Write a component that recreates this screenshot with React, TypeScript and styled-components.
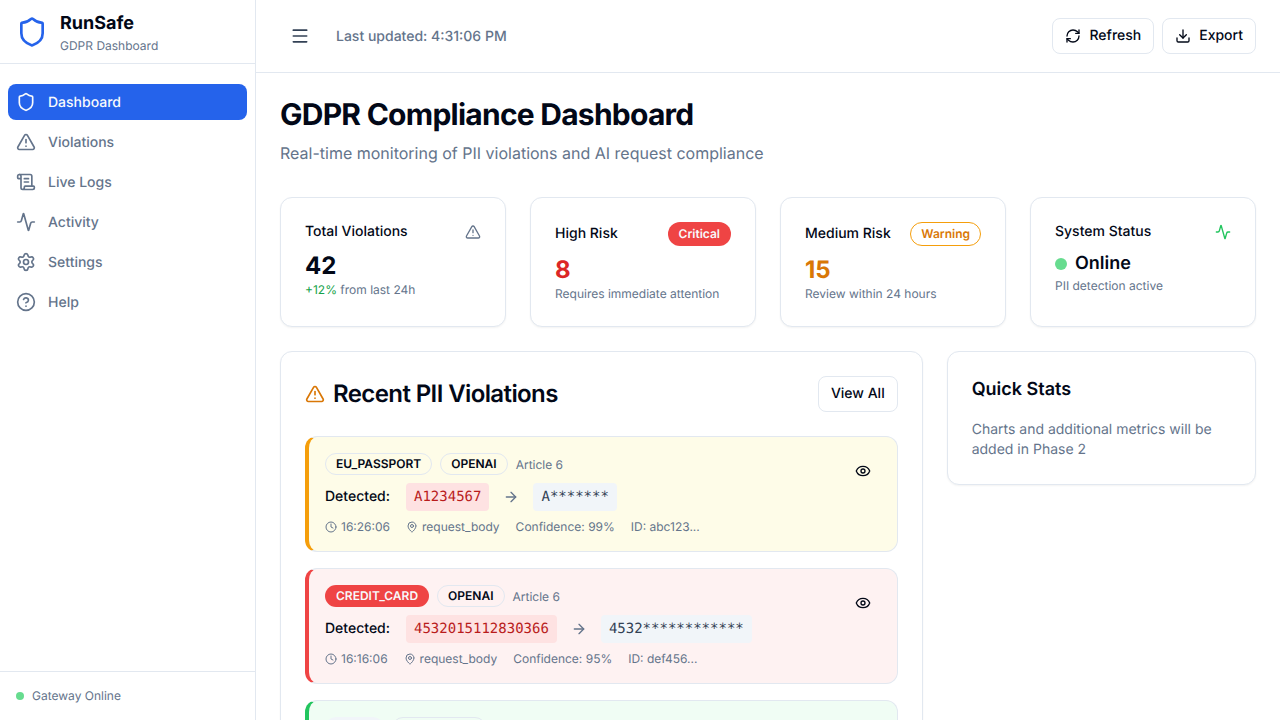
import React from "react";
import styled, { createGlobalStyle } from "styled-components";
import {
  Shield, TriangleAlert, ScrollText, Activity, Settings, CircleHelp, Menu, RefreshCw, Download,
  Clock, MapPin, Eye, ArrowRight,
} from "lucide-react";

const Global = createGlobalStyle`
  html, body, #root { height: 100%; margin: 0; }
  body {
    font-family: Inter, "Noto Sans", sans-serif; color: #020817; background: #fff; overflow: hidden;
    text-rendering: geometricPrecision; font-feature-settings: "rlig" 1, "calt" 1;
  }
  * { box-sizing: border-box; }
`;

const Shell = styled.div`display: flex; height: 100vh; width: 100%;`;
const Sidebar = styled.aside`
  width: 256px; flex: none; display: flex; flex-direction: column;
  border-right: 1px solid #e2e8f0; background: #fff;
`;
const Brand = styled.div`
  height: 64px; flex: none; display: flex; align-items: center; gap: 12px; padding: 0 16px;
  border-bottom: 1px solid #e2e8f0; color: #2563eb;
`;
const BrandText = styled.div`display: flex; flex-direction: column;`;
const BrandName = styled.div`font-size: 18px; line-height: 28px; font-weight: 700; color: #020817;`;
const BrandSub = styled.div`font-size: 12px; line-height: 16px; color: #64748b;`;
const Nav = styled.nav`flex: 1; display: flex; flex-direction: column; gap: 4px; padding: 20px 8px 8px;`;
const NavItem = styled.a<{ $active?: boolean }>`
  height: 36px; display: flex; align-items: center; gap: 12px; padding: 0 8px; border-radius: 8px;
  font-size: 14px; font-weight: 500;
  background: ${(p) => (p.$active ? "#2563eb" : "transparent")};
  color: ${(p) => (p.$active ? "#f8fafc" : "#64748b")};
`;
const SideFoot = styled.div`
  flex: none; display: flex; align-items: center; gap: 8px; padding: 16px;
  border-top: 1px solid #e2e8f0; font-size: 12px; line-height: 16px; color: #64748b;
`;
const Dot = styled.span<{ $size: number }>`
  width: ${(p) => p.$size}px; height: ${(p) => p.$size}px; border-radius: 50%; background: #67dc8f; flex: none;
`;

const Right = styled.div`flex: 1; min-width: 0; display: flex; flex-direction: column;`;
const Topbar = styled.header`
  height: 73px; flex: none; display: flex; align-items: center; justify-content: space-between;
  padding: 0 24px; border-bottom: 1px solid #e2e8f0; background: #fff;
`;
const TopLeft = styled.div`display: flex; align-items: center; gap: 16px;`;
const MenuButton = styled.button`
  width: 40px; height: 40px; display: flex; align-items: center; justify-content: center;
  border: 0; background: transparent; color: #334155; padding: 0;
`;
const Updated = styled.span`font-size: 14px; font-weight: 500; color: #64748b;`;
const TopActions = styled.div`display: flex; gap: 8px;`;
const Button = styled.button`
  height: 36px; display: inline-flex; align-items: center; gap: 8px; padding: 0 12px;
  border: 1px solid #e2e8f0; border-radius: 8px; background: #fff; color: #020817;
  font: 500 14px/20px Inter, sans-serif; text-rendering: geometricPrecision;
`;
const Main = styled.main`
  flex: 1; min-height: 0; overflow-y: scroll; padding: 24px;
  &::-webkit-scrollbar { width: 15px; }
  &::-webkit-scrollbar-track { background: #fafafa; border-left: 1px solid #e8e8e8; border-right: 1px solid #f1f1f1; }
  &::-webkit-scrollbar-thumb {
    background: #c1c1c1; background-clip: padding-box; border: solid transparent;
    border-width: 3px 3px 3px 4px; border-radius: 8px;
  }
`;
const Title = styled.h1`margin: 0; font-size: 30px; line-height: 36px; font-weight: 700; letter-spacing: -0.75px;`;
const Subtitle = styled.p`margin: 8px 0 0; font-size: 16px; line-height: 24px; color: #64748b;`;
const StatGrid = styled.div`display: grid; grid-template-columns: repeat(4, 1fr); gap: 24px; margin-top: 32px;`;
const Card = styled.section`
  background: #fff; border: 1px solid #e2e8f0; border-radius: 12px; box-shadow: 0 1px 2px rgba(0,0,0,.05);
`;
const StatCard = styled(Card)`padding: 24px;`;
const StatHead = styled.div`display: flex; align-items: center; justify-content: space-between; margin-bottom: 8px; color: #64748b;`;
const StatLabel = styled.span`font-size: 14px; line-height: 20px; font-weight: 500; color: #020817;`;
const StatValue = styled.div<{ $color?: string }>`
  font-size: 24px; line-height: 32px; font-weight: 700; color: ${(p) => p.$color ?? "#020817"};
`;
const StatNote = styled.div`font-size: 12px; line-height: 16px; color: #64748b;`;
const Up = styled.span`color: #16a34a;`;
const Online = styled.div`display: flex; align-items: center; gap: 8px; font-size: 18px; line-height: 28px; font-weight: 600;`;
const Pill = styled.span<{ $kind: "danger" | "warn" | "outline" | "muted" }>`
  display: inline-flex; align-items: center; border-radius: 999px; padding: 0 10px; height: 22px;
  font-size: 12px; font-weight: 600; line-height: 16px; white-space: nowrap; border: 1px solid;
  border-color: ${(p) => ({ danger: "transparent", warn: "#f59e0b", outline: "#e2e8f0", muted: "transparent" }[p.$kind])};
  background: ${(p) => ({ danger: "#ef4444", warn: "#fff", outline: "transparent", muted: "#f1f5f9" }[p.$kind])};
  color: ${(p) => ({ danger: "#f8fafc", warn: "#d97706", outline: "#020817", muted: "#0f172a" }[p.$kind])};
`;
const StatPill = styled(Pill)`height: 24px;`;

const Columns = styled.div`display: grid; grid-template-columns: repeat(3, 1fr); gap: 24px; margin-top: 24px; align-items: start;`;
const Panel = styled(Card)`grid-column: span 2; padding: 24px;`;
const PanelHead = styled.div`display: flex; align-items: center; justify-content: space-between; margin-bottom: 24px;`;
const PanelTitle = styled.h2`
  margin: 0; display: flex; align-items: center; gap: 8px; font-size: 24px; line-height: 32px;
  font-weight: 600; letter-spacing: -0.6px; color: #020817;
  svg { color: #d97706; }
`;
const List = styled.div`display: flex; flex-direction: column; gap: 16px;`;
const Violation = styled.article<{ $accent: string; $bg: string }>`
  display: flex; justify-content: space-between; align-items: flex-start; padding: 16px;
  border: 1px solid #e2e8f0; border-left: 4px solid ${(p) => p.$accent}; border-radius: 12px; background: ${(p) => p.$bg};
`;
const VBody = styled.div`display: flex; flex-direction: column; gap: 8px;`;
const Tags = styled.div`display: flex; align-items: center; gap: 8px; font-size: 12px; color: #64748b;`;
const Detect = styled.div`display: flex; align-items: center; gap: 8px; font-size: 14px; line-height: 20px; font-weight: 500; color: #020817;`;
const Arrow = styled.span`display: flex; margin: 0 6px; color: #64748b;`;
const Code = styled.code<{ $raw?: boolean }>`
  font: 400 14px/20px "DejaVu Sans Mono", monospace; padding: 4px 8px; border-radius: 4px; margin-left: ${(p) => (p.$raw ? "8px" : "0")};
  background: ${(p) => (p.$raw ? "#fee2e2" : "#f1f5f9")};
  color: ${(p) => (p.$raw ? "#b91c1c" : "#334155")};
`;
const Meta = styled.div`display: flex; align-items: center; gap: 16px; font-size: 12px; line-height: 16px; color: #64748b;`;
const MetaItem = styled.span`display: inline-flex; align-items: center; gap: 4px;`;
const EyeButton = styled.button`
  width: 36px; height: 36px; border: 0; background: transparent; display: flex; align-items: center; justify-content: center;
  color: #020817; padding: 0; flex: none;
`;
const SideCard = styled(Card)`padding: 24px;`;
const SideTitle = styled.h3`margin: 0 0 16px; font-size: 18px; line-height: 28px; font-weight: 600; color: #020817;`;
const SideText = styled.p`margin: 0; font-size: 14px; line-height: 20px; color: #64748b;`;

const nav = [
  { label: "Dashboard", Icon: Shield, active: true },
  { label: "Violations", Icon: TriangleAlert },
  { label: "Live Logs", Icon: ScrollText },
  { label: "Activity", Icon: Activity },
  { label: "Settings", Icon: Settings },
  { label: "Help", Icon: CircleHelp },
];

const items = [
  { type: "EU_PASSPORT", kind: "outline", api: "OPENAI", accent: "#f59e0b", bg: "#fefce8", raw: "A1234567", masked: "A*******", time: "16:26:06", conf: "99%", id: "abc123..." },
  { type: "CREDIT_CARD", kind: "danger", api: "OPENAI", accent: "#ef4444", bg: "#fef2f2", raw: "4532015112830366", masked: "4532************", time: "16:16:06", conf: "95%", id: "def456..." },
  { type: "EMAIL", kind: "muted", api: "ANTHROPIC", accent: "#22c55e", bg: "#f0fdf4", raw: "john@acme.eu", masked: "j***@acme.eu", time: "16:06:06", conf: "92%", id: "ghi789..." },
] as const;

export default function App() {
  return (
    <Shell>
      <Global />
      <Sidebar>
        <Brand>
          <Shield size={32} />
          <BrandText>
            <BrandName>RunSafe</BrandName>
            <BrandSub>GDPR Dashboard</BrandSub>
          </BrandText>
        </Brand>
        <Nav>
          {nav.map(({ label, Icon, active }) => (
            <NavItem key={label} $active={active}>
              <Icon size={20} />
              {label}
            </NavItem>
          ))}
        </Nav>
        <SideFoot>
          <Dot $size={8} />
          Gateway Online
        </SideFoot>
      </Sidebar>
      <Right>
        <Topbar>
          <TopLeft>
            <MenuButton><Menu size={20} /></MenuButton>
            <Updated>Last updated: 4:31:06 PM</Updated>
          </TopLeft>
          <TopActions>
            <Button><RefreshCw size={16} />Refresh</Button>
            <Button><Download size={16} />Export</Button>
          </TopActions>
        </Topbar>
        <Main>
          <Title>GDPR Compliance Dashboard</Title>
          <Subtitle>Real-time monitoring of PII violations and AI request compliance</Subtitle>
          <StatGrid>
            <StatCard>
              <StatHead><StatLabel>Total Violations</StatLabel><TriangleAlert size={16} /></StatHead>
              <StatValue>42</StatValue>
              <StatNote><Up>+12%</Up> from last 24h</StatNote>
            </StatCard>
            <StatCard>
              <StatHead><StatLabel>High Risk</StatLabel><StatPill $kind="danger">Critical</StatPill></StatHead>
              <StatValue $color="#dc2626">8</StatValue>
              <StatNote>Requires immediate attention</StatNote>
            </StatCard>
            <StatCard>
              <StatHead><StatLabel>Medium Risk</StatLabel><StatPill $kind="warn">Warning</StatPill></StatHead>
              <StatValue $color="#d97706">15</StatValue>
              <StatNote>Review within 24 hours</StatNote>
            </StatCard>
            <StatCard>
              <StatHead><StatLabel>System Status</StatLabel><Activity size={16} color="#22c55e" /></StatHead>
              <Online><Dot $size={12} />Online</Online>
              <StatNote>PII detection active</StatNote>
            </StatCard>
          </StatGrid>
          <Columns>
            <Panel>
              <PanelHead>
                <PanelTitle><TriangleAlert size={20} />Recent PII Violations</PanelTitle>
                <Button>View All</Button>
              </PanelHead>
              <List>
                {items.map((v) => (
                  <Violation key={v.id} $accent={v.accent} $bg={v.bg}>
                    <VBody>
                      <Tags>
                        <Pill $kind={v.kind}>{v.type}</Pill>
                        <Pill $kind="outline">{v.api}</Pill>
                        Article 6
                      </Tags>
                      <Detect>
                        Detected:
                        <Code $raw>{v.raw}</Code>
                        <Arrow><ArrowRight size={16} /></Arrow>
                        <Code>{v.masked}</Code>
                      </Detect>
                      <Meta>
                        <MetaItem><Clock size={12} />{v.time}</MetaItem>
                        <MetaItem><MapPin size={12} />request_body</MetaItem>
                        <span>Confidence: {v.conf}</span>
                        <span>ID: {v.id}</span>
                      </Meta>
                    </VBody>
                    <EyeButton><Eye size={16} /></EyeButton>
                  </Violation>
                ))}
              </List>
            </Panel>
            <SideCard>
              <SideTitle>Quick Stats</SideTitle>
              <SideText>Charts and additional metrics will be added in Phase 2</SideText>
            </SideCard>
          </Columns>
        </Main>
      </Right>
    </Shell>
  );
}
